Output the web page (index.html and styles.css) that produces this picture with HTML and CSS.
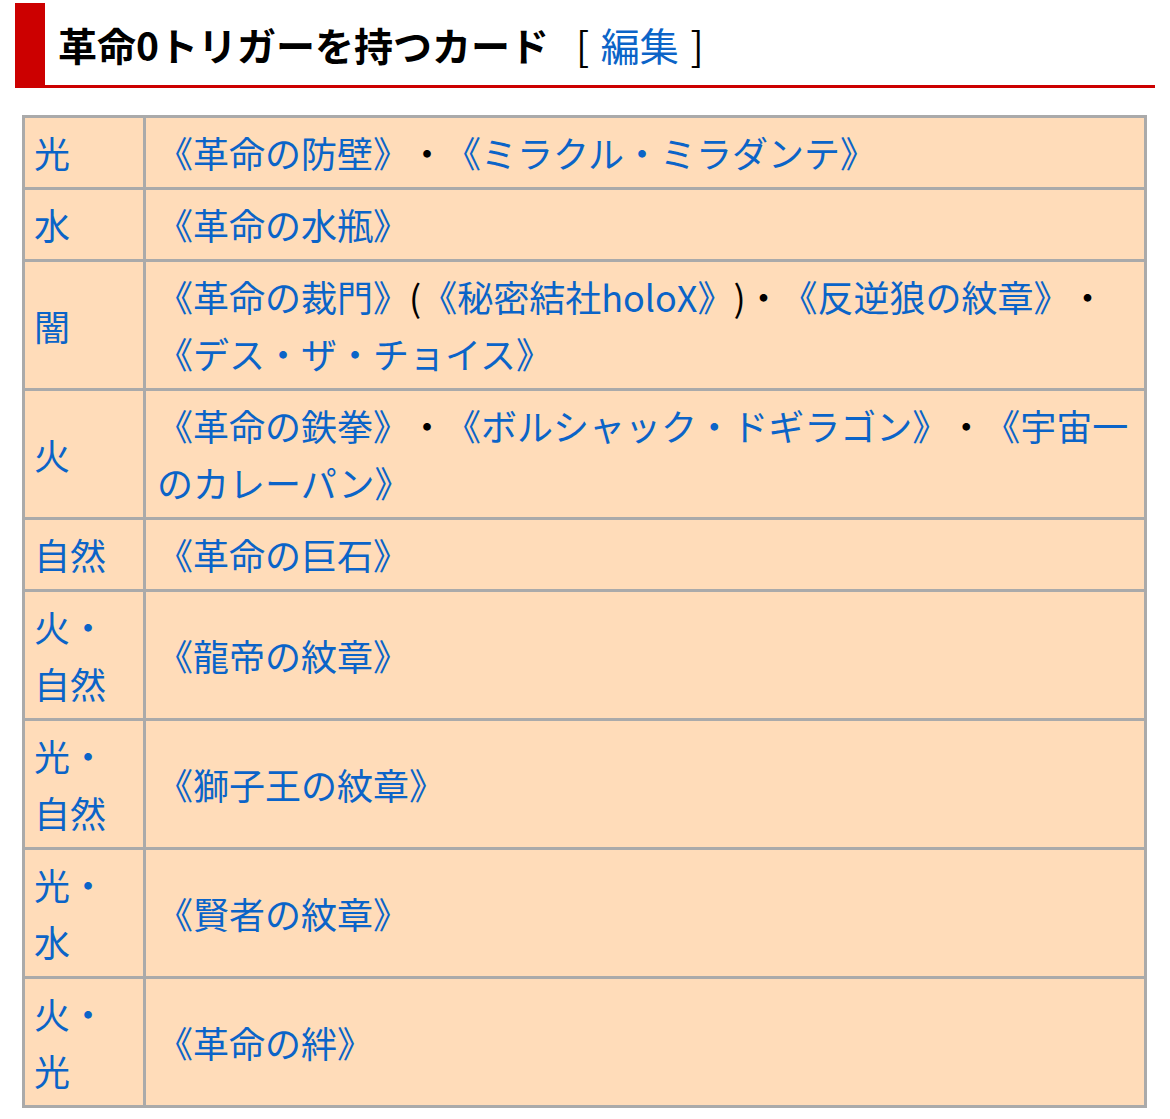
FILE: index.html
```html
<!DOCTYPE html>
<html lang="ja">
<head>
<meta charset="utf-8">
<title>革命0トリガーを持つカード</title>
<link rel="stylesheet" href="styles.css">
</head>
<body>
<h2 class="heading">革命0トリガーを持つカード <span class="edit">[ <a href="#">編集</a> ]</span></h2>
<table class="cards">
  <tr><td class="attr"><a href="#">光</a></td><td class="list"><a href="#">《革命の防壁》</a>・<a href="#">《ミラクル・ミラダンテ》</a></td></tr>
  <tr><td class="attr"><a href="#">水</a></td><td class="list"><a href="#">《革命の水瓶》</a></td></tr>
  <tr><td class="attr"><a href="#">闇</a></td><td class="list"><a href="#">《革命の裁門》</a>(<a href="#">《秘密結社holoX》</a>)・<a href="#">《反逆狼の紋章》</a>・<a href="#">《デス・ザ・チョイス》</a></td></tr>
  <tr><td class="attr"><a href="#">火</a></td><td class="list"><a href="#">《革命の鉄拳》</a>・<a href="#">《ボルシャック・ドギラゴン》</a>・<a href="#">《宇宙一のカレーパン》</a></td></tr>
  <tr><td class="attr"><a href="#">自然</a></td><td class="list"><a href="#">《革命の巨石》</a></td></tr>
  <tr><td class="attr"><a href="#">火・自然</a></td><td class="list"><a href="#">《龍帝の紋章》</a></td></tr>
  <tr><td class="attr"><a href="#">光・自然</a></td><td class="list"><a href="#">《獅子王の紋章》</a></td></tr>
  <tr><td class="attr"><a href="#">光・水</a></td><td class="list"><a href="#">《賢者の紋章》</a></td></tr>
  <tr><td class="attr"><a href="#">火・光</a></td><td class="list"><a href="#">《革命の絆》</a></td></tr>
</table>
</body>
</html>
```

FILE: styles.css
```css
html, body {
  margin: 0;
  padding: 0;
  background: #ffffff;
}

body {
  font-family: "Noto Sans CJK JP", "Noto Sans", sans-serif;
  color: #000000;
  text-spacing-trim: space-all;
}

a {
  color: #0b64c8;
  text-decoration: none;
}

.heading {
  margin: 3px 15px 0;
  height: 82px;
  border-left: 30px solid #cc0000;
  border-bottom: 3px solid #cc0000;
  padding-left: 13px;
  font-size: 39px;
  font-weight: bold;
  line-height: 82px;
  white-space: nowrap;
}

.edit {
  font-weight: normal;
  margin-left: 18px;
}

.edit a {
  margin: 0 3px;
}

.cards {
  margin: 27px 0 0 22px;
  width: 1125px;
  border-collapse: collapse;
  background: #ffdcb9;
  border: 3px solid #aaaaaa;
  font-size: 36px;
  line-height: 57px;
}

.cards td {
  border: 3px solid #aaaaaa;
  padding: 6px 11px;
  vertical-align: middle;
}

.cards td.attr {
  width: 98px;
  padding-left: 9px;
}
```
